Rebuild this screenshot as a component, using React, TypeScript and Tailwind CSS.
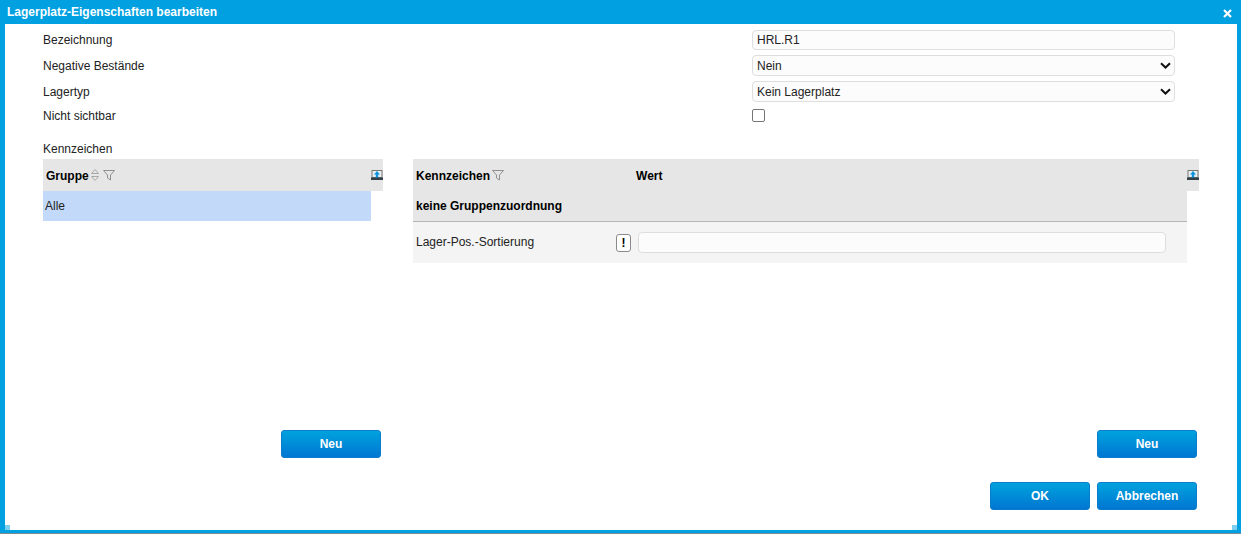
import React from "react";

function FilterIcon() {
  return (
    <svg width="12" height="11" viewBox="0 0 12 11" fill="none" stroke="#8f8f8f" strokeWidth="1">
      <path d="M0.5 0.5H11.5L7.5 5V10L4.5 8V5Z" />
    </svg>
  );
}

function SortIcon() {
  return (
    <svg width="8" height="14" viewBox="0 0 8 14" fill="none" stroke="#a8a8a8" strokeWidth="1">
      <path d="M0.5 5.5L4 1.5L7.5 5.5H0.5M0.5 8.5H7.5L4 12.5L0.5 8.5" />
    </svg>
  );
}

function ExportIcon() {
  return (
    <svg width="12" height="10" viewBox="0 0 12 10">
      <rect x="1" y="0.5" width="10" height="7" fill="#e8eef2" stroke="#777" strokeWidth="1" />
      <path d="M6 1L9 4.5H7.2V8H4.8V4.5H3Z" fill="#0a93e0" />
      <rect x="0" y="7.5" width="12" height="2.5" fill="#33404a" />
    </svg>
  );
}

function BlueButton({ label, className = "" }: { label: string; className?: string }) {
  return (
    <button
      type="button"
      className={`h-7 w-[100px] rounded-[3px] border border-[#0a7cc9] bg-gradient-to-b from-[#00a2dd] to-[#0076d2] text-xs font-bold text-white ${className}`}
    >
      {label}
    </button>
  );
}

const fieldClass =
  "w-[423px] rounded-[4px] border border-[#dedede] bg-[#fcfcfc] text-xs text-[#222] outline-none";

function SelectField({ value }: { value: string }) {
  return (
    <div className="relative mt-[5px] h-[21px] w-[423px]">
      <select className={`${fieldClass} h-[21px] appearance-none pl-1`} defaultValue={value}>
        <option>{value}</option>
      </select>
      <svg
        width="11"
        height="7"
        viewBox="0 0 11 7"
        fill="none"
        stroke="#111"
        strokeWidth="2"
        className="pointer-events-none absolute right-[4px] top-[7px]"
      >
        <path d="M1 1.2L5.5 5.5L10 1.2" />
      </svg>
    </div>
  );
}

export default function App() {
  return (
    <div className="flex h-[534px] w-[1241px] flex-col overflow-hidden bg-[#00a0e1] font-['Liberation_Sans',Arial,sans-serif] text-xs text-[#222]">
      <header className="flex h-6 shrink-0 items-center justify-between pl-[7px] pr-[9px] text-xs font-bold text-white">
        <span>Lagerplatz-Eigenschaften bearbeiten</span>
        <svg width="9" height="9" viewBox="0 0 9 9" stroke="white" strokeWidth="2.2" className="mt-[3px]">
          <path d="M1 1L8 8M8 1L1 8" />
        </svg>
      </header>

      <main className="relative ml-[5px] mr-[4px] flex h-[506px] shrink-0 flex-col bg-white pl-[38px] pr-[38px] pt-[6px]">
        <section className="grid grid-cols-[709px_423px] items-center">
          <label className="h-5 leading-5">Bezeichnung</label>
          <input defaultValue="HRL.R1" className={`${fieldClass} h-5 pl-1`} />

          <label className="mt-[6px] leading-5">Negative Bestände</label>
          <SelectField value="Nein" />

          <label className="mt-[6px] leading-5">Lagertyp</label>
          <SelectField value="Kein Lagerplatz" />

          <label className="mt-[4px] h-5 leading-5">Nicht sichtbar</label>
          <div className="mt-[4px] flex h-[18px] items-center self-start">
            <span className="h-[13px] w-[13px] rounded-[2px] border border-[#767676] bg-white" />
          </div>
        </section>

        <div className="mt-[14px] h-[19px] leading-[18px]">Kennzeichen</div>

        <section className="flex h-[299px] gap-[30px]">
          <div className="flex w-[340px] flex-col">
            <div className="flex h-8 items-center bg-[#e6e6e6] pl-[3px]">
              <span className="mt-[2px] font-bold text-black">Gruppe</span>
              <span className="ml-[2px]"><SortIcon /></span>
              <span className="ml-[4px]"><FilterIcon /></span>
              <span className="ml-auto"><ExportIcon /></span>
            </div>
            <div className="h-[30px] w-[328px] bg-[#c2d9fa] pl-[2px] leading-[30px]">Alle</div>
            <BlueButton label="Neu" className="mr-[2px] mt-auto self-end" />
          </div>

          <div className="flex w-[786px] flex-col">
            <div className="flex h-8 items-center bg-[#e6e6e6] pl-[3px]">
              <span className="mt-[2px] font-bold text-black">Kennzeichen</span>
              <span className="ml-[2px]"><FilterIcon /></span>
              <span className="ml-[132px] mt-[2px] font-bold text-black">Wert</span>
              <span className="ml-auto"><ExportIcon /></span>
            </div>
            <div className="h-[31px] w-[774px] border-b border-[#b5b5b5] bg-[#e6e6e6] pl-[3px] font-bold leading-[30px] text-black">
              keine Gruppenzuordnung
            </div>
            <div className="flex h-[41px] w-[774px] items-center bg-[#f4f4f4] pl-[3px]">
              <span className="mb-[2px] w-[200px]">Lager-Pos.-Sortierung</span>
              <span className="flex h-[18px] w-[15px] items-center justify-center rounded-[3px] border border-[#8a8a8a] bg-white font-bold text-black">
                !
              </span>
              <input className="ml-[7px] h-[21px] w-[528px] rounded-[4px] border border-[#dedede] bg-[#fcfcfc] outline-none" />
            </div>
            <BlueButton label="Neu" className="mr-[2px] mt-auto self-end" />
          </div>
        </section>

        <footer className="mr-[2px] mt-[24px] flex justify-end gap-[7px]">
          <BlueButton label="OK" />
          <BlueButton label="Abbrechen" />
        </footer>

        <span className="absolute bottom-0 left-0 h-[5px] w-[5px] bg-[#7fcff0]" />
        <span className="absolute bottom-0 right-0 h-[5px] w-[5px] bg-[#7fcff0]" />
      </main>

      <div className="mt-[3px] h-px shrink-0 bg-[#7f8a90]" />
    </div>
  );
}
